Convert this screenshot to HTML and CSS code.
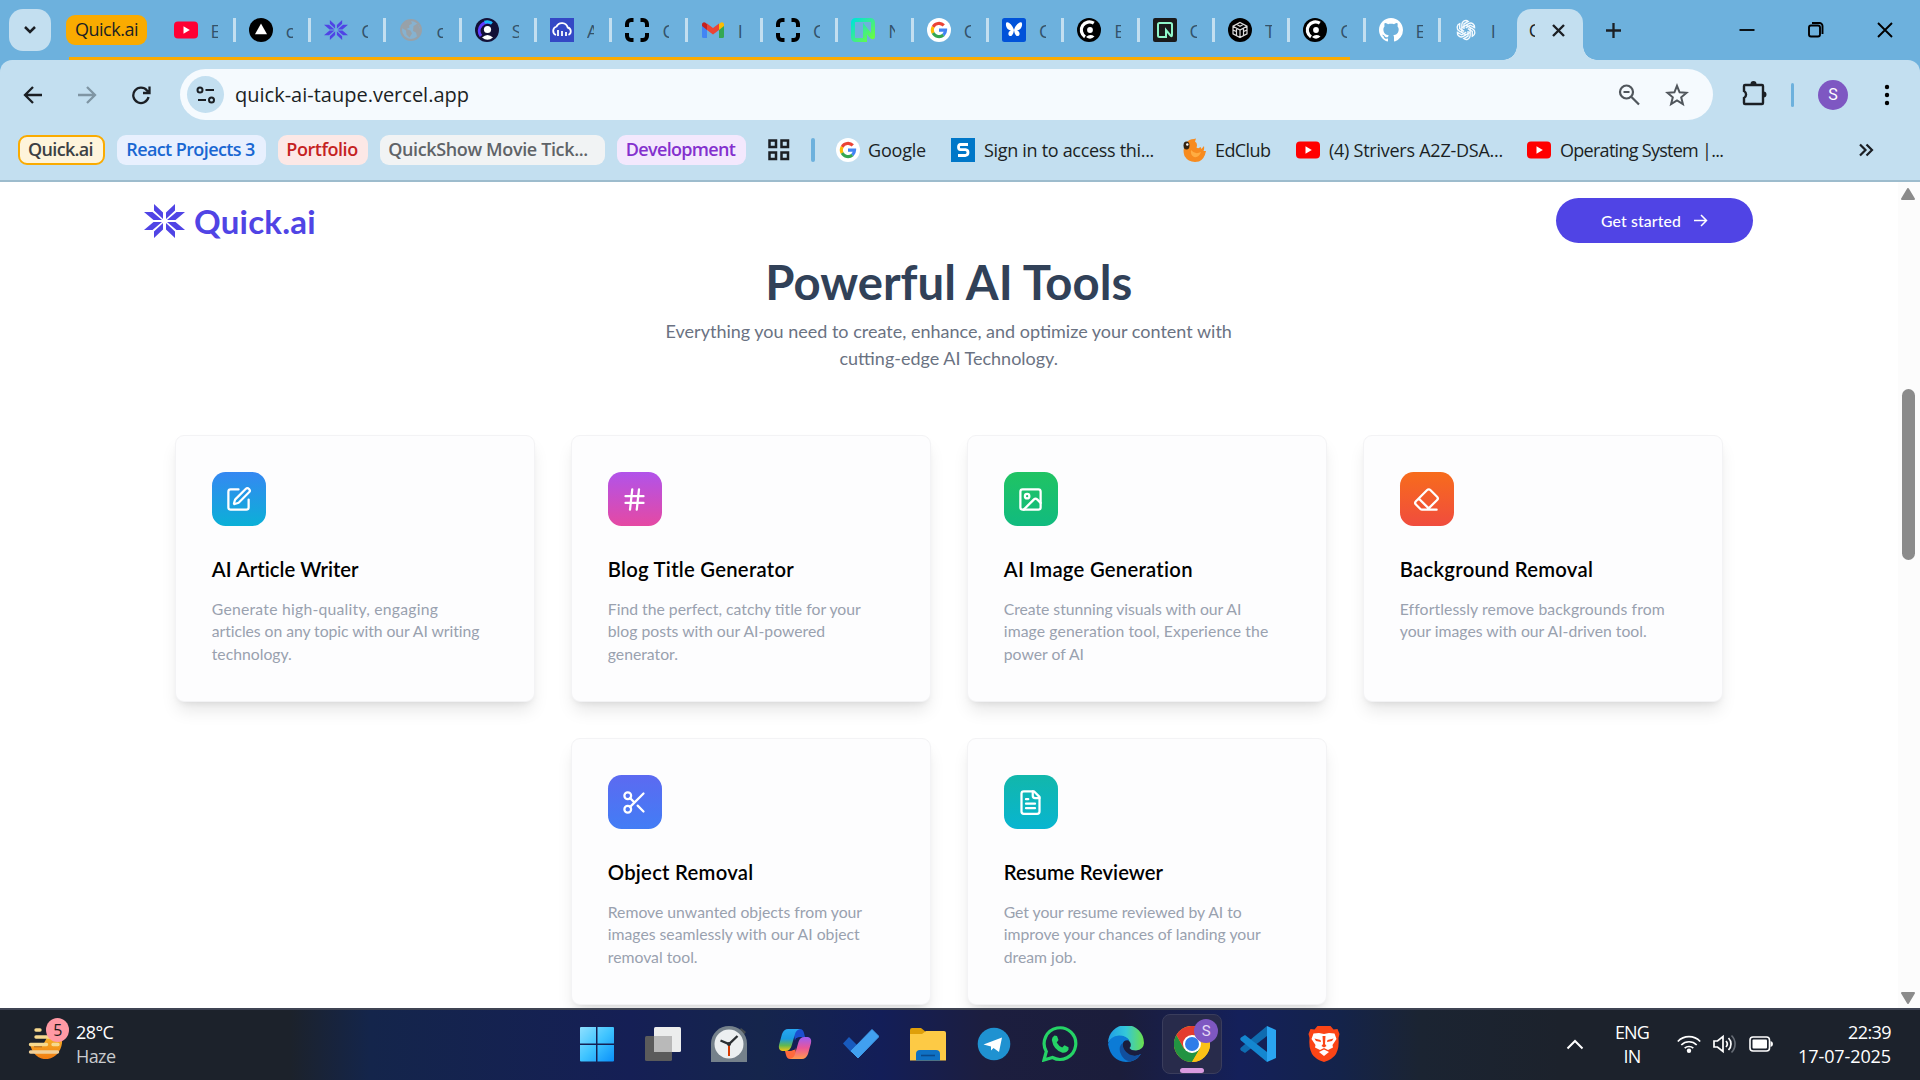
FILE: index.html
```
<!DOCTYPE html>
<html lang="en">
<head>
<meta charset="utf-8">
<title>Quick.ai</title>
<link rel="stylesheet" href="styles.css">
</head>
<body>
<svg class="defs" aria-hidden="true">
  <defs>
    <symbol id="youtube" viewBox="0 0 24 24"><rect y="3.5" width="24" height="17" rx="4"/><path d="M9.5 8.2v7.6l6.3-3.8z" fill="#fff"/></symbol>
    <symbol id="google" viewBox="0 0 24 24"><circle cx="12" cy="12" r="12" fill="#fff"/><g fill="none" stroke-width="3.1"><path d="M16.8 7.4A6.7 6.7 0 0 0 6.1 8.9" stroke="#ea4335"/><path d="M6.1 8.9a6.7 6.7 0 0 0 0 6.2" stroke="#fbbc05"/><path d="M6.1 15.1a6.7 6.7 0 0 0 10.3 1.9" stroke="#34a853"/><path d="M16.4 17a6.7 6.7 0 0 0 2.2-4.9H12" stroke="#4285f4"/></g></symbol>
    <symbol id="burst" viewBox="0 0 41 34"><path d="M10 0l9 8.5V15l-9-8.5zM31 0l-9 8.5V15l9-8.5zM10 34l9-8.5V19l-9 8.5zM31 34l-9-8.5V19l9 8.5zM0 8h8.5l9.5 8H9.500zM41 8h-8.500L23 16h8.500zM0 26h8.500L18 18H9.500zM41 26h-8.500L23 18h8.500z"/></symbol>
    <symbol id="brackets" viewBox="0 0 24 24"><path d="M2 9V6a4 4 0 0 1 4-4h2.500M15.500 2H18a4 4 0 0 1 4 4v3M22 15v3a4 4 0 0 1-4 4h-2.500M8.500 22H6a4 4 0 0 1-4-4v-3" fill="none" stroke="#000" stroke-width="4"/></symbol>
    <symbol id="clerk" viewBox="0 0 24 24"><circle cx="12" cy="12" r="12" fill="#000"/><path d="M16.800 5.200A8 8 0 1 0 8 18.800" fill="none" stroke="#fff" stroke-width="3.200"/><circle cx="13" cy="12" r="2.900" fill="#fff"/><path d="M9 19q4-3.500 8.500-.5-4 4-8.500.5z" fill="#fff"/></symbol>
    <symbol id="neon" viewBox="0 0 24 24"><path d="M4.500 2h15A2.500 2.500 0 0 1 22 4.500V18q0 2.500-2 0l-6-7.500V22H4.500A2.500 2.500 0 0 1 2 19.500v-15A2.500 2.500 0 0 1 4.500 2z" fill="none" stroke="url(#neonGrad)" stroke-width="4"/></symbol>
    <linearGradient id="neonGrad" x2="1" y2="1"><stop stop-color="#00e5d4"/><stop offset=".5" stop-color="#3aeb93"/><stop offset="1" stop-color="#6dff36"/></linearGradient>
  </defs>
</svg>

<header class="browser">
  <div class="tabstrip">
    <button class="tab-search"><svg width="14" height="10" viewBox="0 0 14 10"><path d="M2 2l5 5 5-5" fill="none" stroke="#1b1f24" stroke-width="2.500"/></svg></button>
    <div class="group">
      <span class="group-chip">Quick.ai</span>
      <div class="tab"><svg fill="#ff0033"><use href="#youtube"/></svg><span>E</span></div>
      <div class="tab"><svg viewBox="0 0 24 24"><circle cx="12" cy="12" r="12"/><path d="M12 5.500l6 10.700H6z" fill="#fff"/></svg><span>c</span></div>
      <div class="tab"><svg fill="#5044e5"><use href="#burst"/></svg><span>C</span></div>
      <div class="tab"><svg viewBox="0 0 24 24"><circle cx="12" cy="12" r="10" fill="#86b2d0" stroke="#98a1a8" stroke-width="2"/><path d="M4 7q3-4.500 8-4.500l1 3-3 2 .5 2-3 1.500 4 1.500 1.500 3-2.500 4-3-3-.5-4L3 10zM14.500 8l4-2.500L21.500 12l-1 4-2.500 2.500-1-4-3-1.500z" fill="#98a1a8"/></svg><span>c</span></div>
      <div class="tab"><svg viewBox="0 0 24 24"><circle cx="12" cy="12" r="12" fill="#131036"/><path d="M16.500 5.200A8.500 8.500 0 0 0 6 18" fill="none" stroke="#5f3bff" stroke-width="3"/><path d="M17 5.400a8.500 8.500 0 0 0-7.500-1.200" fill="none" stroke="#18b8f5" stroke-width="3"/><circle cx="12.500" cy="11.500" r="3.600" fill="#fff"/><path d="M7 19.500q5.500-5 11 0-5.500 4.500-11 0z" fill="#fff"/></svg><span>S</span></div>
      <div class="tab"><svg viewBox="0 0 24 24"><path d="M0 0h24v24H0z" fill="#3448c5"/><path d="M6 17a4.500 4.500 0 0 1 .5-8.500 6 6 0 0 1 11.200 1A4 4 0 0 1 18.500 17M8 12v6M12 13v5M16 14v4" fill="none" stroke="#fff" stroke-width="1.800"/></svg><span>A</span></div>
      <div class="tab"><svg><use href="#brackets"/></svg><span>C</span></div>
      <div class="tab"><svg viewBox="0 0 24 24"><path d="M1 6.500v12A1.500 1.500 0 0 0 2.500 20H6V10z" fill="#4285f4"/><path d="M23 6.500v12a1.500 1.500 0 0 1-1.500 1.500H18V10z" fill="#34a853"/><path d="M18 10V6l1.500-1.300C21 3.500 23 4.500 23 6.500V8l-5 4z" fill="#fbbc04"/><path d="M6 12V5.500l6 4.500 6-4.500V12l-6 4.500z" fill="#ea4335"/><path d="M1 8V6.500c0-2 2-3 3.500-1.800L6 6v6z" fill="#c5221f"/></svg><span>I</span></div>
      <div class="tab"><svg><use href="#brackets"/></svg><span>C</span></div>
      <div class="tab"><svg><use href="#neon"/></svg><span>N</span></div>
      <div class="tab"><svg><use href="#google"/></svg><span>C</span></div>
      <div class="tab"><svg viewBox="0 0 24 24"><rect width="24" height="24" rx="2.500" fill="#0052d9"/><path d="M12 12C10 5.500 4.500 2.500 4 5.500s1.500 6.500 5 7c-3 .5-3.500 5-1 5.500s3.500-3 4-6zM12 12c2-6.500 7.500-9.500 8-6.500s-1.500 6.500-5 7c3 .5 3.500 5 1 5.500s-3.500-3-4-6z" fill="#fff"/></svg><span>C</span></div>
      <div class="tab"><svg><use href="#clerk"/></svg><span>E</span></div>
      <div class="tab"><svg viewBox="0 0 24 24"><rect width="24" height="24" rx="2" fill="#1a1a1a"/><path d="M6.500 5h11a1.500 1.500 0 0 1 1.500 1.500V17q0 2-1.500.5L13 12v7H6.500A1.500 1.500 0 0 1 5 17.500v-11A1.500 1.500 0 0 1 6.500 5z" fill="none" stroke="#8ff5c9" stroke-width="2"/></svg><span>C</span></div>
      <div class="tab"><svg viewBox="0 0 24 24"><circle cx="12" cy="12" r="12"/><path d="M12 4.500l7 3.700v7.600l-7 3.700-7-3.700V8.200zM5 8.200l7 3.800 7-3.800M12 12v7.500M8.500 6.300l3.500 2 3.500-2M8.500 10v3.500L5 12M8.500 13.500v4M15.500 10v3.500L19 12M15.500 13.500v4" fill="none" stroke="#ddd" stroke-width="1.200"/></svg><span>T</span></div>
      <div class="tab"><svg><use href="#clerk"/></svg><span>C</span></div>
    </div>
    <div class="tab"><svg viewBox="0 0 16 16" fill="#fff"><path d="M8 0C3.580 0 0 3.580 0 8c0 3.540 2.290 6.530 5.470 7.590.4.070.55-.17.55-.38 0-.19-.01-.82-.01-1.490-2.010.37-2.530-.49-2.690-.94-.09-.23-.48-.94-.82-1.130-.28-.15-.68-.52-.01-.53.63-.01 1.080.58 1.230.82.72 1.210 1.870.87 2.330.66.070-.52.28-.87.51-1.070-1.780-.2-3.640-.89-3.640-3.950 0-.87.31-1.590.82-2.150-.08-.2-.36-1.020.08-2.120 0 0 .67-.21 2.200.82.64-.18 1.320-.27 2-.27s1.360.09 2 .27c1.530-1.040 2.200-.82 2.200-.82.44 1.100.16 1.920.08 2.120.51.56.82 1.270.82 2.150 0 3.070-1.870 3.750-3.650 3.950.29.25.54.73.54 1.480 0 1.070-.01 1.930-.01 2.200 0 .21.15.46.55.38A8.010 8.010 0 0 0 16 8c0-4.420-3.580-8-8-8z"/></svg><span>E</span></div>
    <div class="tab tab-last"><svg viewBox="-13 -13 26 26" fill="none" stroke="#f4fafe" stroke-width="1.500"><path id="petal" d="M-4.500 2.600V-6a4.300 4.300 0 0 1 7-3.300L-2.200-6.600V-1"/><use href="#petal" transform="rotate(60)"/><use href="#petal" transform="rotate(120)"/><use href="#petal" transform="rotate(180)"/><use href="#petal" transform="rotate(240)"/><use href="#petal" transform="rotate(300)"/></svg><span>I</span></div>
    <div class="tab-active"><span>C</span><svg width="15" height="15" viewBox="0 0 15 15"><path d="M2 2l11 11M13 2L2 13" stroke="#1b1f24" stroke-width="2.400"/></svg></div>
    <svg class="new-tab" width="17" height="17" viewBox="0 0 17 17"><path d="M8.500 1v15M1 8.500h15" stroke="#1b1f24" stroke-width="2.300"/></svg>
    <div class="window-controls">
      <svg width="18" height="18" viewBox="0 0 18 18"><path d="M1.500 9h15" stroke="#000" stroke-width="1.800"/></svg>
      <svg width="18" height="18" viewBox="0 0 18 18"><rect x="2" y="4.500" width="11" height="11" rx="2"/><path d="M5 2h7.500a3 3 0 0 1 3 3v8"/></svg>
      <svg width="18" height="18" viewBox="0 0 18 18"><path d="M2 2l14 14M16 2L2 16"/></svg>
    </div>
  </div>

  <div class="toolbar">
    <nav class="nav-buttons">
      <svg viewBox="0 0 20 20"><path d="M19 10H2M10 2l-8 8 8 8"/></svg>
      <svg class="dim" viewBox="0 0 20 20"><path d="M1 10h17M10 2l8 8-8 8"/></svg>
      <svg viewBox="0 0 20 20"><path d="M17.500 12a7.700 7.700 0 1 1-1.500-6.500L18 7.500M18.500 1.500V8H12"/></svg>
    </nav>
    <div class="omnibox">
      <span class="site-info"><svg width="20" height="18" viewBox="0 0 20 18"><g fill="none" stroke="#1b1f24" stroke-width="2"><circle cx="4" cy="4" r="2.500"/><path d="M9.500 4H18M2 14h8"/><circle cx="15.500" cy="14" r="2.500"/></g></svg></span>
      <span class="url">quick-ai-taupe.vercel.app</span>
      <svg class="zoom-icon" width="22" height="22" viewBox="0 0 22 22"><g fill="none" stroke="#50565c" stroke-width="2.200"><circle cx="8.500" cy="8" r="6.500"/><path d="M13.500 13l7.500 7.500M5.500 8h6"/></g></svg>
      <svg width="24" height="24" viewBox="0 0 24 24"><path d="M12 2.800l2.600 6.500 7 .5-5.400 4.500 1.700 6.800-5.900-3.700-5.900 3.700 1.700-6.800L2.400 9.800l7-.5z" fill="none" stroke="#50565c" stroke-width="2"/></svg>
    </div>
    <svg class="puzzle" width="26" height="26" viewBox="0 0 26 26"><path d="M4 5h17a1 1 0 0 1 1 1v17a1 1 0 0 1-1 1H4a1 1 0 0 1-1-1v-5a4 4 0 0 0 0-7V6a1 1 0 0 1 1-1z" fill="none" stroke="#1b1f24" stroke-width="2.400"/><path d="M9.500 4a3 3 0 0 1 6 0zM22.500 11.500a3 3 0 0 1 0 6z" fill="#1b1f24"/></svg>
    <i class="divider"></i>
    <span class="avatar">S</span>
    <svg class="dots" width="6" height="22" viewBox="0 0 6 22"><circle cx="3" cy="3" r="2.200"/><circle cx="3" cy="11" r="2.200"/><circle cx="3" cy="19" r="2.200"/></svg>
  </div>

  <div class="bookmarks">
    <span class="chip chip-yellow">Quick.ai</span>
    <span class="chip chip-blue">React Projects 3</span>
    <span class="chip chip-red">Portfolio</span>
    <span class="chip chip-grey">QuickShow Movie Tick...</span>
    <span class="chip chip-purple">Development</span>
    <svg class="apps" width="22" height="22" viewBox="0 0 22 22"><path d="M1.500 1.500h6.500v6.500H1.500zM13.500 1.500H20v6.500h-6.500zM1.500 13.500h6.500V20H1.500zM13.500 13.500H20V20h-6.500z" fill="none" stroke="#1b1f24" stroke-width="2.500"/></svg>
    <i class="divider divider-wide"></i>
    <a class="bm bm-google"><svg><use href="#google"/></svg>Google</a>
    <a class="bm bm-sign"><svg viewBox="0 0 24 24"><path d="M0 0h24v24H0z" fill="#0077c8"/><path d="M17 6.500H9.500Q7.500 6.500 7.500 9t2 2.700h5q2.500.3 2.500 2.800t-2.500 3H7" fill="none" stroke="#fff" stroke-width="2.800"/></svg>Sign in to access thi...</a>
    <a class="bm bm-ed"><svg viewBox="0 0 24 24"><path d="M4 5q3-4 8-4l2-.5-1 3q3 2 1.500 6 2 1.500 4-.5l1 2 2.500-3q.5 3-.5 5l2.500 0q-1.500 8-7 10.500Q7 25.500 2.500 18 0 11 4 5z" fill="#f78b1f"/><path d="M9 12q4 5 10 2-2 6-7 5-4-2-3-7z" fill="#ffad42"/><ellipse cx="4.500" cy="7.500" rx="3" ry="4" fill="#33220f"/><circle cx="5.300" cy="6.500" r="1.200" fill="#fff"/></svg>EdClub</a>
    <a class="bm bm-dsa"><svg fill="#f00"><use href="#youtube"/></svg>(4) Strivers A2Z-DSA...</a>
    <a class="bm bm-os"><svg fill="#f00"><use href="#youtube"/></svg>Operating System |...</a>
    <svg class="more" width="16" height="14" viewBox="0 0 16 14"><path d="M2 1.500L7.500 7 2 12.500M8.500 1.500L14 7l-5.500 5.500" fill="none" stroke="#1b1f24" stroke-width="2.200"/></svg>
  </div>
</header>

<div class="viewport">
  <main class="page">
    <nav class="site-nav">
      <a class="logo"><svg width="41" height="34" fill="#5044e5"><use href="#burst"/></svg>Quick.ai</a>
      <button class="cta">Get started <svg width="15" height="13" viewBox="0 0 15 13"><path d="M1 6.500h12M8 1l5.500 5.500L8 12" fill="none" stroke="#fff" stroke-width="1.500"/></svg></button>
    </nav>
    <h1>Powerful AI Tools</h1>
    <p class="lead">Everything you need to create, enhance, and optimize your content with<br>cutting-edge AI Technology.</p>
    <section class="cards">
      <article class="card">
        <span class="tile tile-blue"><svg viewBox="0 0 24 24"><path d="M12 3H5a2 2 0 0 0-2 2v14a2 2 0 0 0 2 2h14a2 2 0 0 0 2-2v-7"/><path d="M18.375 2.625a1 1 0 0 1 3 3l-9.013 9.014a2 2 0 0 1-.853.505l-2.873.84a.5.5 0 0 1-.62-.62l.84-2.873a2 2 0 0 1 .506-.852z"/></svg></span>
        <h3 class="tight">AI Article Writer</h3>
        <p><span class="wide">Generate high-quality, engaging</span><br><span class="narrow">articles on any topic with our AI writing</span><br>technology.</p>
      </article>
      <article class="card">
        <span class="tile tile-pink"><svg viewBox="0 0 24 24"><path d="M4 9h16M4 15h16M10 3L8 21M16 3l-2 18"/></svg></span>
        <h3>Blog Title Generator</h3>
        <p>Find the perfect, catchy title for your<br>blog posts with our AI-powered<br>generator.</p>
      </article>
      <article class="card">
        <span class="tile tile-green"><svg viewBox="0 0 24 24"><rect x="3" y="3" width="18" height="18" rx="2"/><circle cx="9" cy="9" r="2"/><path d="M21 15l-3.086-3.086a2 2 0 0 0-2.828 0L6 21"/></svg></span>
        <h3>AI Image Generation</h3>
        <p><span class="snug">Create stunning visuals with our AI</span><br><span class="loose">image generation tool, Experience the</span><br>power of AI</p>
      </article>
      <article class="card">
        <span class="tile tile-orange"><svg viewBox="0 0 24 24"><path d="M21 21H8a2 2 0 0 1-1.420-.587l-3.994-3.999a2 2 0 0 1 0-2.828l10-10a2 2 0 0 1 2.829 0l5.999 6a2 2 0 0 1 0 2.828L12.834 21M5.082 11.090l8.828 8.828"/></svg></span>
        <h3>Background Removal</h3>
        <p><span class="loose">Effortlessly remove backgrounds from</span><br>your images with our AI-driven tool.</p>
      </article>
      <article class="card">
        <span class="tile tile-indigo"><svg viewBox="0 0 24 24"><circle cx="6" cy="6" r="3"/><path d="M8.120 8.120L12 12M20 4L8.120 15.880"/><circle cx="6" cy="18" r="3"/><path d="M14.800 14.800L20 20"/></svg></span>
        <h3>Object Removal</h3>
        <p>Remove unwanted objects from your<br>images seamlessly with our AI object<br>removal tool.</p>
      </article>
      <article class="card">
        <span class="tile tile-teal"><svg viewBox="0 0 24 24"><path d="M15 2H6a2 2 0 0 0-2 2v16a2 2 0 0 0 2 2h12a2 2 0 0 0 2-2V7z"/><path d="M14 2v4a2 2 0 0 0 2 2h4M10 9H8M16 13H8M16 17H8"/></svg></span>
        <h3 class="tight">Resume Reviewer</h3>
        <p><span class="snug">Get your resume reviewed by AI to</span><br>improve your chances of landing your<br>dream job.</p>
      </article>
    </section>
  </main>
  <aside class="scrollbar">
    <svg width="14" height="12" viewBox="0 0 14 12"><path d="M7 1l6 10H1z" fill="#8b8b8b" stroke="#8b8b8b" stroke-width="2" stroke-linejoin="round"/></svg>
    <i class="thumb"></i>
    <svg width="14" height="12" viewBox="0 0 14 12"><path d="M7 11L1 1h12z" fill="#8b8b8b" stroke="#8b8b8b" stroke-width="2" stroke-linejoin="round"/></svg>
  </aside>
</div>

<footer class="taskbar">
  <div class="weather">
    <svg width="36" height="46" viewBox="0 0 36 46"><defs><linearGradient id="sun" x2="0" y2="1"><stop stop-color="#f9c22e"/><stop offset="1" stop-color="#f07c12"/></linearGradient></defs><path d="M2 28h14l5-9q1-4 5-4h6q2 3 2 9a16 18 0 0 1-32 4z" fill="url(#sun)"/><path d="M6 31h8" stroke="#a85f14" stroke-width="2.500"/><g stroke="#f6d98e" stroke-width="3.400" stroke-linecap="round"><path d="M8 15h4M8 22h26M2.500 29.500h16M25 29.500h5"/><path d="M2.500 37h27" stroke="#f0cf98"/></g></svg>
    <b>5</b>
    <div class="weather-text">28°C<br><span>Haze</span></div>
  </div>
  <div class="apps-row">
    <span><svg viewBox="0 0 36 36"><defs><linearGradient id="win" x2="1" y2="1"><stop stop-color="#8fe0ff"/><stop offset=".5" stop-color="#3fc4ff"/><stop offset="1" stop-color="#0a90fa"/></linearGradient></defs><path d="M1 2a1 1 0 0 1 1-1h15v16.500H1zM18.500 1H34a1 1 0 0 1 1 1v15.500H18.500zM1 19h16v16.500H2a1 1 0 0 1-1-1zM18.500 19H35v15.500a1 1 0 0 1-1 1H18.500z" fill="url(#win)"/></svg></span>
    <span><svg viewBox="0 0 36 36"><rect x="9" y="1" width="27" height="25" rx="1.500" fill="#eceded"/><rect y="10" width="27" height="25" rx="1.500" fill="#5b5b5b"/><path d="M9 10h18v16H9z" fill="#b9b9b9"/></svg></span>
    <span><svg viewBox="0 0 36 36"><path d="M30 2l5 4-3 4-5-4z" fill="#444a50"/><path d="M0 36V17.500a18 17.500 0 0 1 36 0V36z" fill="#75818b"/><circle cx="18" cy="18" r="14.500" fill="#eceff1"/><path d="M9.500 14.500L18 18l8.500-8" fill="none" stroke="#2b2f33" stroke-width="2.400"/><path d="M18 19v11" stroke="#d83b01" stroke-width="2"/><circle cx="18" cy="18" r="2" fill="#2b2f33"/></svg></span>
    <span><svg viewBox="0 0 36 36"><defs><linearGradient id="cpa" x2="0" y2="1"><stop stop-color="#27a7f2"/><stop offset=".45" stop-color="#1b9be0"/><stop offset=".75" stop-color="#62b850"/><stop offset="1" stop-color="#f5c513"/></linearGradient><linearGradient id="cpb" x2="0" y2="1"><stop stop-color="#9c5cf5"/><stop offset=".5" stop-color="#ea5698"/><stop offset="1" stop-color="#ff9a4d"/></linearGradient></defs><path d="M16 3h7q3 0 4 4l1 4h-5q-4 0-5 4z" fill="#1b4fd0"/><path d="M20 33h-7q-3 0-4-4l-1-4h5q4 0 5-4z" fill="#ff6a3d"/><path d="M11 3h12q-4 1-5 5l-3.500 12q-1.500 5-6 5H5q-4-1-3-6L5 8q2-5 6-5z" fill="url(#cpa)"/><path d="M25 33H13q4-1 5-5l3.500-12q1.500-5 6-5H31q4 1 3 6l-3 11q-2 5-6 5z" fill="url(#cpb)"/><path d="M19 12h3l-4.500 12h-2.500z" fill="#131e58"/></svg></span>
    <span><svg viewBox="0 0 36 36"><path d="M0 17.500l6-6.500 9 9-6.500 6.500z" fill="#185abd"/><path d="M8 25L29 3.500l7 7L15 32z" fill="#41a0f0" stroke="#41a0f0" stroke-linejoin="round"/></svg></span>
    <span><svg viewBox="0 0 36 36"><path d="M0 4a2 2 0 0 1 2-2h9l5 4v8H0z" fill="#df9f0a"/><path d="M0 8h12l4-3h18a2 2 0 0 1 2 2v27.500H0z" fill="#fdca45"/><path d="M6 34.500V28a4 4 0 0 1 4-4h16a4 4 0 0 1 4 4v6.500z" fill="#0f71c4"/><path d="M11 29.500h14" stroke="#0a4a8c" stroke-width="1.600"/></svg></span>
    <span><svg viewBox="0 0 36 36"><circle cx="18" cy="18" r="16.300" fill="#1f92d1"/><path d="M7.500 18.500L26 11.500 23 26l-5.500-4-2.500 2.500v-4z" fill="#fff"/></svg></span>
    <span><svg viewBox="0 0 36 36"><path d="M2 34l2.300-8.500A15.800 15.800 0 1 1 10.500 31.500z" fill="none" stroke="#25d366" stroke-width="3.200"/><path d="M12.500 9.500l2.500.5 1.500 4-1.800 2.500q2 3.500 5.500 5l2.300-2.200 4 2v2.500q-2 3.500-6 3Q11.500 24 9.800 14q0-3 2.700-4.500z" fill="#25d366"/></svg></span>
    <span><svg viewBox="0 0 36 36"><defs><linearGradient id="edt"><stop stop-color="#1f9ee8"/><stop offset=".5" stop-color="#34c7d9"/><stop offset="1" stop-color="#6be04c"/></linearGradient></defs><path d="M0 17A18 18 0 0 1 36 17q-.5 7-8 7.500-5 0-6.500-2.500 2-2 1-5Q18 8 8 11 2 13 0 17z" fill="url(#edt)"/><path d="M0 18Q2 10 11 9.500q7 0 10.500 5-6-1.500-7 4-.5 12 13 11.500 3-.3 5.500-2Q28 36 18 36 3 35 0 18z" fill="#0c7bd6"/><path d="M14.500 17q-4 3.500-2.500 9 3 8.500 10 9.500 7-1.500 11-7.500-6 3-11.500.5-6.500-3.500-7-11.500z" fill="#114f9e"/></svg></span>
    <span class="running"><svg viewBox="0 0 36 36"><circle cx="18" cy="18" r="18" fill="#fbc116"/><path d="M2.400 9A18 18 0 0 1 33.600 9H18z" fill="#e33b2e"/><path d="M2.400 9A18 18 0 0 0 18 36l8-13.500-8 4.500-8-4.500z" fill="#229342"/><path d="M2.400 9L10 22.500 18 9z" fill="#e33b2e"/><path d="M18 9h15.600A18 18 0 0 1 18 36l8-13.500z" fill="#fbc116"/><circle cx="18" cy="18" r="9" fill="#fff"/><circle cx="18" cy="18" r="7" fill="#2f7de9"/></svg><b>S</b><i></i></span>
    <span><svg viewBox="0 0 36 36"><path d="M27 0l9 4v28l-9 4z" fill="#2aa5f2"/><path d="M27 0v10L5 27l-4-2.500q-1.500-1.500 0-3z" fill="#0f6cb0"/><path d="M27 36V26L5 9l-4 2.500q-1.500 1.500 0 3z" fill="#1487d0"/></svg></span>
    <span><svg viewBox="0 0 36 36"><path d="M11.500 0h13l3 3.500 4-.5 2 5-1 4q1 9-2.500 16Q27 33 18 36 9 33 6 28 2.500 21 3.500 12l-1-4 2-5 4 .5z" fill="#fb4516"/><path d="M13 7l5 1 5-1 5.500.5 2 5.500-4 6 .5 2.500-5 2.500L18 22l-4 2-5-2.500.500-2.500-4-6 2-5.500z" fill="#fff"/><path d="M8.500 12.500l6 1.500.5 2-5-1zM27.500 12.500l-6 1.500-.5 2 5-1zM16.500 10h3L19 18l1.500 2-2.500 1.500L15.500 20l1.500-2z" fill="#fb4516"/><path d="M18 23.500l5 2.500-5 4-5-4z" fill="#fff"/></svg></span>
  </div>
  <div class="tray">
    <svg class="chevron" width="18" height="11" viewBox="0 0 18 11"><path d="M1.500 9.500L9 2l7.500 7.500" fill="none" stroke="#fff" stroke-width="2"/></svg>
    <div class="lang">ENG<br>IN</div>
    <svg class="wifi" width="24" height="18" viewBox="0 0 24 18"><g fill="none" stroke="#fff" stroke-width="1.700"><path d="M.8 6.500a15.500 15.500 0 0 1 22.400 0M4.300 10a10.800 10.800 0 0 1 15.400 0M7.700 13.200a6.300 6.300 0 0 1 8.600 0"/></g><circle cx="12" cy="15.700" r="2.200" fill="#fff"/></svg>
    <svg class="vol" width="24" height="20" viewBox="0 0 24 20"><g fill="none" stroke="#fff" stroke-width="1.700"><path d="M1 7v6h3.500L10 17.500v-15L4.500 7zM13 7a4.500 4.500 0 0 1 0 6M15.500 4a8.500 8.500 0 0 1 0 12"/><path d="M18.500 1.500a12 12 0 0 1 0 17" stroke="#666c75"/></g></svg>
    <svg class="battery" width="24" height="16" viewBox="0 0 24 16"><rect x="1" y="1" width="19.500" height="14" rx="3" fill="none" stroke="#fff" stroke-width="1.600"/><rect x="3.500" y="3.500" width="14.500" height="9" rx="1" fill="#fff"/><path d="M21.500 5q2.500.5 2.500 3t-2.500 3z" fill="#fff"/></svg>
    <div class="clock">22:39<br><span>17-07-2025</span></div>
  </div>
</footer>
</body>
</html>
```
FILE: styles.css
```
* { box-sizing: border-box; }
body {
  margin: 0;
  width: 1920px;
  height: 1080px;
  overflow: hidden;
  display: flex;
  flex-direction: column;
  background: #fff;
  font-family: "Open Sans", "Noto Sans", sans-serif;
  color: #1b1f24;
}
svg { display: block; flex: none; }
.defs { position: absolute; width: 0; height: 0; }
button { border: 0; padding: 0; font: inherit; }

/* Browser chrome */
.browser {
  height: 182px;
  flex: none;
  background: linear-gradient(#6db1dd 90px, #c3dff0 90px);
  border-bottom: 2px solid #9dbccd;
}
.tabstrip {
  height: 60px;
  display: flex;
  align-items: center;
  padding-left: 9px;
  font-size: 18px;
}
.tab-search {
  width: 42px;
  height: 42px;
  border-radius: 14px;
  background: #c3dff0;
  display: grid;
  place-items: center;
}
.group {
  position: relative;
  display: flex;
  align-items: center;
  height: 60px;
  margin-left: 15px;
}
.group::after {
  content: "";
  position: absolute;
  left: 3px;
  right: 16px;
  bottom: 0;
  height: 3px;
  background: #faab00;
}
.group-chip {
  width: 81px;
  height: 30px;
  margin-right: 13.500px;
  border-radius: 9px;
  background: #faab00;
  line-height: 29px;
  text-align: center;
  letter-spacing: -0.500px;
}
.tab {
  width: 75.320px;
  height: 24px;
  flex: none;
  padding-left: 13px;
  display: flex;
  align-items: center;
  gap: 13px;
  border-right: 3px solid #c3dff0;
}
.tab svg { width: 24px; height: 24px; }
.tab span {
  width: 7px;
  overflow: hidden;
  line-height: 30px;
  margin-top: 2px;
  color: #33526a;
}
.tab-last { border-color: transparent; }
.tab-active {
  position: relative;
  width: 66px;
  height: 51px;
  margin: 9px 0 0 0.500px;
  border-radius: 14px 14px 0 0;
  background: #c3dff0;
  display: flex;
  align-items: center;
  padding: 0 0 9px 12px;
}
.tab-active::before, .tab-active::after {
  content: "";
  position: absolute;
  bottom: 0;
  width: 14px;
  height: 14px;
}
.tab-active::before { left: -14px; background: radial-gradient(circle at 0 0, transparent 13.500px, #c3dff0 14px); }
.tab-active::after { right: -14px; background: radial-gradient(circle at 100% 0, transparent 13.500px, #c3dff0 14px); }
.tab-active span { width: 6px; margin-right: 16px; overflow: hidden; }
.new-tab { margin-left: 22px; }
.window-controls { display: flex; gap: 51px; margin: 0 26px 0 auto; }
.window-controls svg { fill: none; stroke: #000; stroke-width: 1.900; }

.toolbar {
  height: 70px;
  display: flex;
  align-items: center;
  padding: 0 0 1px 23px;
  border-radius: 12px 12px 0 0;
  background: #c3dff0;
}
.nav-buttons { display: flex; gap: 34px; width: 157px; }
.nav-buttons svg { width: 20px; height: 20px; fill: none; stroke: #1b1f24; stroke-width: 2.300; }
.nav-buttons .dim { stroke: #7f95a3; }
.omnibox {
  width: 1533px;
  height: 51px;
  border-radius: 26px;
  background: #f5fafe;
  display: flex;
  align-items: center;
  padding: 0 24px 0 7px;
}
.site-info {
  width: 37px;
  height: 37px;
  border-radius: 50%;
  background: #c3dff0;
  display: grid;
  place-items: center;
}
.url { margin-left: 11px; font-size: 20px; letter-spacing: 0; }
.zoom-icon { margin: 0 25px 0 auto; }
.puzzle { margin: -4px 24px 0 28px; }
.divider { width: 3px; height: 24px; border-radius: 2px; background: #6db1dd; }
.divider-wide { width: 4px; margin: 0 21px; }
.avatar {
  width: 30px;
  height: 30px;
  margin: 0 36px 0 24px;
  border-radius: 50%;
  background: #7e57c2;
  color: #fff;
  font: 16px/30px Roboto, sans-serif;
  text-align: center;
}
.bookmarks {
  height: 50px;
  display: flex;
  align-items: center;
  padding: 0 46px 10px 18px;
  background: #c3dff0;
  font-size: 18px;
  white-space: nowrap;
}
.chip {
  height: 30px;
  margin-right: 12px;
  padding-right: 2px;
  border-radius: 9px;
  line-height: 28px;
  text-align: center;
  font-weight: 600;
}
.chip-yellow { width: 87px; background: #fef4db; border: 2px solid #faab00; line-height: 25px; color: #3c4043; letter-spacing: -0.660px; }
.chip-blue { width: 149px; background: #e8f0fe; color: #1967d2; letter-spacing: -0.600px; }
.chip-red { width: 90px; background: #fce8e6; color: #c5221f; letter-spacing: -0.450px; }
.chip-grey { width: 225px; padding-right: 9px; background: #f1f3f4; color: #5f6368; letter-spacing: -0.360px; }
.chip-purple { width: 129px; background: #f3e8fd; color: #8430ce; letter-spacing: -0.680px; margin-right: 22px; }
.bm { display: flex; align-items: center; gap: 9px; line-height: 26px; margin-top: -1px; }
.bm svg { width: 24px; height: 24px; margin-top: 1px; }
.bm-google { width: 115px; letter-spacing: -0.200px; gap: 8px; }
.bm-sign { width: 231px; letter-spacing: -0.310px; }
.bm-ed { width: 114px; letter-spacing: -0.600px; }
.bm-dsa { width: 231px; letter-spacing: -0.250px; }
.bm-os { letter-spacing: -0.720px; }
.more { margin-left: auto; }

/* Web page */
.viewport { flex: 1; min-height: 0; display: flex; overflow: hidden; }
.page {
  width: 1897.500px;
  flex: none;
  font-family: Lato, "Open Sans", sans-serif;
  text-align: center;
}
.site-nav {
  height: 78px;
  display: flex;
  align-items: center;
  justify-content: space-between;
  padding: 0 144.500px 1px 144px;
}
.logo {
  display: flex;
  align-items: center;
  gap: 9px;
  font-size: 33px;
  font-weight: 700;
  letter-spacing: 0.250px;
  color: #5044e5;
}
.cta {
  width: 197px;
  height: 45px;
  border-radius: 23px;
  background: #5044e5;
  color: #fff;
  font-size: 15.750px;
  font-weight: 500;
  letter-spacing: 0.150px;
  display: flex;
  align-items: center;
  justify-content: center;
  gap: 12px;
}
h1 {
  margin: 0;
  font-size: 47.250px;
  line-height: 44px;
  font-weight: 700;
  letter-spacing: 0;
  color: #314158;
}
.lead { margin: 14px 0 63px; font-size: 18px; line-height: 27px; color: #6a7282; }
.cards {
  display: flex;
  flex-wrap: wrap;
  justify-content: center;
  gap: 36px;
  padding: 0 150px;
}
.card {
  width: 360px;
  height: 267px;
  padding: 36px;
  border: 1px solid #f3f3f5;
  border-radius: 9px;
  background: #fdfdfe;
  box-shadow: 0 11px 17px -3px rgba(0, 0, 0, .1), 0 4px 7px -4px rgba(0, 0, 0, .1);
  text-align: left;
}
.card h3 {
  margin: 27px 0 12.500px;
  font-size: 20.250px;
  line-height: 32px;
  font-weight: 600;
  letter-spacing: 0.270px;
  color: #000;
  white-space: nowrap;
}
.card .tight { letter-spacing: 0.030px; }
.card p { margin: 0; font-size: 15.750px; line-height: 22.500px; color: #99a1af; white-space: nowrap; }
.card .loose { letter-spacing: 0.100px; }
.card .snug { letter-spacing: -0.040px; }
.card .wide { letter-spacing: 0.230px; }
.card .narrow { letter-spacing: -0.060px; }
.tile {
  display: grid;
  place-items: center;
  width: 54px;
  height: 54px;
  border-radius: 13.500px;
}
.tile svg { width: 27px; height: 27px; fill: none; stroke: #fff; stroke-width: 2; stroke-linecap: round; stroke-linejoin: round; }
.tile-blue { background: linear-gradient(#3588f2, #0bb0d7); }
.tile-pink { background: linear-gradient(#b153ea, #e549a3); }
.tile-green { background: linear-gradient(#20c363, #11bb7f); }
.tile-orange { background: linear-gradient(#f76c1c, #f04c3e); }
.tile-indigo { background: linear-gradient(#5c6af1, #427df5); }
.tile-teal { background: linear-gradient(#12b7ab, #08b5d0); }
.scrollbar {
  flex: 1;
  background: #fcfcfc;
  display: flex;
  flex-direction: column;
  align-items: center;
  padding: 6px 1px 4px 0;
}
.thumb { width: 13px; height: 171px; margin: 189px 0 auto; border-radius: 7px; background: #8b8b8b; }

/* Taskbar */
.taskbar {
  height: 72px;
  flex: none;
  display: flex;
  align-items: center;
  padding-bottom: 2px;
  border-top: 2px solid #3f4453;
  background: linear-gradient(90deg, #1c222b 290px, #14254b 370px, #151f55 630px, #15254c 760px, #131e58 880px, #1c1e3f 985px, #1b1d3b 1120px, #14205a 1240px, #14234a 1340px, #1b2432 1420px, #1c222c 1560px);
  color: #fff;
  font-size: 18px;
  line-height: 24px;
  letter-spacing: -0.600px;
}
.weather { position: relative; width: 564px; flex: none; display: flex; align-items: center; padding-left: 28px; }
.weather svg { margin-top: -12px; }
.weather b {
  position: absolute;
  left: 46px;
  top: -3px;
  width: 23px;
  height: 24px;
  border-radius: 50%;
  background: #ff99a4;
  color: #1a1a1a;
  font-weight: 400;
  font-size: 16px;
  text-align: center;
}
.weather-text { margin: -1px 0 0 12px; }
.weather-text span { color: #c9cbce; }
.apps-row { display: flex; }
.apps-row span { position: relative; width: 66.100px; height: 60px; display: grid; place-items: center; }
.apps-row svg { width: 36px; height: 36px; }
.apps-row .running { width: 60px; margin: 0 3px; border: 1px solid #3a3d5c; border-radius: 8px; background: #282b4b; }
.running b {
  position: absolute;
  right: 3px;
  top: 4px;
  width: 24px;
  height: 24px;
  border-radius: 50%;
  background: #7e57c2;
  color: #e4d8f5;
  font: 15px/24px Roboto, sans-serif;
  text-align: center;
}
.running i { position: absolute; left: 17px; bottom: 0; width: 24px; height: 5px; border-radius: 3px; background: #d99be0; }
.tray { flex: 1; display: flex; align-items: center; justify-content: flex-end; padding-right: 29px; }
.chevron { margin-right: 30px; }
.lang { width: 36px; text-align: center; letter-spacing: -0.800px; }
.wifi { margin: 0 12px 0 27px; }
.battery { margin-left: 12px; }
.clock { width: 118px; text-align: right; margin-top: -1px; }
.clock span { letter-spacing: -0.100px; }
```
